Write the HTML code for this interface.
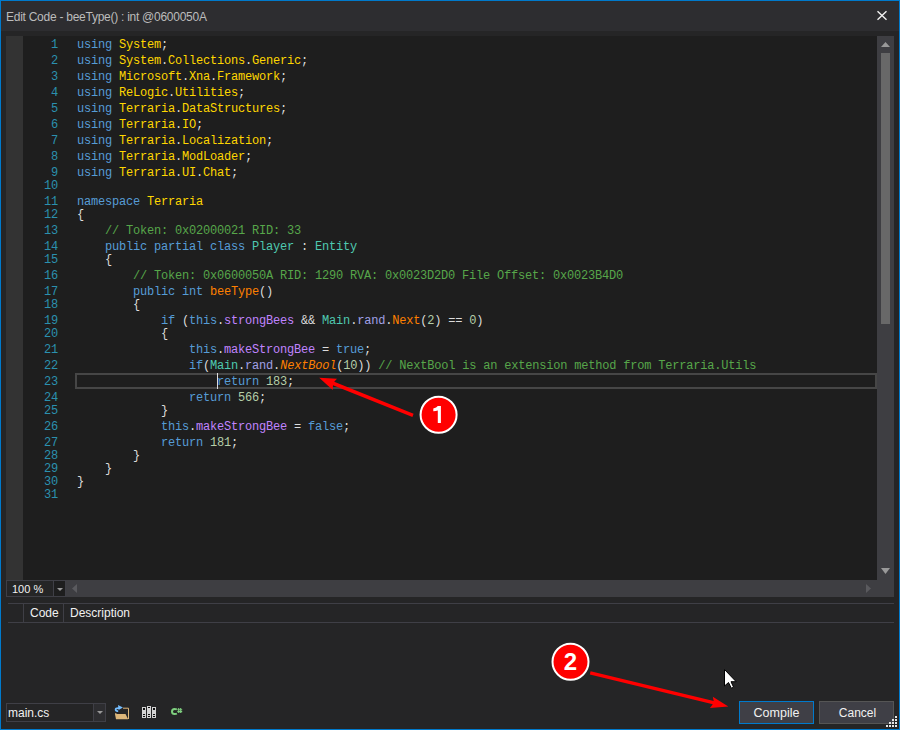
<!DOCTYPE html>
<html><head><meta charset="utf-8">
<style>
html,body{margin:0;padding:0;}
body{width:900px;height:730px;position:relative;overflow:hidden;background:#252526;font-family:"Liberation Sans",sans-serif;}
.a{position:absolute;}
#frame{left:0;top:0;width:898px;height:728px;border:1px solid #007acc;}
#title{left:1px;top:1px;width:898px;height:30px;background:#2d2d30;}
#ttext{left:6px;top:10px;font-size:12px;letter-spacing:-0.26px;color:#bcbcbc;white-space:pre;line-height:14px;}
#editor{left:6px;top:36px;width:871px;height:544px;background:#1e1e1e;}
#glyph{left:6px;top:36px;width:17px;height:544px;background:#333333;}
#vscroll{left:877px;top:36px;width:17px;height:561px;background:#3e3e42;}
#hscroll{left:66px;top:580px;width:828px;height:17px;background:#3e3e42;}
.code{position:absolute;left:77px;font-family:"Liberation Mono",monospace;font-size:12px;letter-spacing:-0.2px;line-height:16px;white-space:pre;color:#dcdcdc;}
.ln{position:absolute;left:23px;width:35px;text-align:right;font-family:"Liberation Mono",monospace;font-size:12px;letter-spacing:-0.2px;line-height:16px;white-space:pre;color:#2b91af;}
.k{color:#569cd6}.n{color:#ffd700}.t{color:#4ec9b0}.c{color:#57a64a}.u{color:#b5cea8}.m{color:#ff8000}.f{color:#c084ff}.s{color:#a0a0e6}.i{font-style:italic}
</style></head><body>
<div class="a" id="frame"></div>
<div class="a" id="title"></div>
<div class="a" id="ttext">Edit Code - beeType() : int @0600050A</div>
<svg class="a" style="left:876px;top:10px" width="12" height="11" viewBox="0 0 12 11"><path d="M1.5 1.3 L10.5 9.7 M10.5 1.3 L1.5 9.7" stroke="#f1f1f1" stroke-width="1.4" fill="none"/></svg>
<div class="a" id="editor"></div>
<div class="a" id="glyph"></div>
<div class="a" id="vscroll"></div>
<div class="a" id="hscroll"></div>
<!-- CODE -->
<div class="ln" style="top:37px">1</div>
<div class="code" style="top:37px"><span class="k">using</span> <span class="n">System</span>;</div>
<div class="ln" style="top:53px">2</div>
<div class="code" style="top:53px"><span class="k">using</span> <span class="n">System</span>.<span class="n">Collections</span>.<span class="n">Generic</span>;</div>
<div class="ln" style="top:69px">3</div>
<div class="code" style="top:69px"><span class="k">using</span> <span class="n">Microsoft</span>.<span class="n">Xna</span>.<span class="n">Framework</span>;</div>
<div class="ln" style="top:85px">4</div>
<div class="code" style="top:85px"><span class="k">using</span> <span class="n">ReLogic</span>.<span class="n">Utilities</span>;</div>
<div class="ln" style="top:101px">5</div>
<div class="code" style="top:101px"><span class="k">using</span> <span class="n">Terraria</span>.<span class="n">DataStructures</span>;</div>
<div class="ln" style="top:117px">6</div>
<div class="code" style="top:117px"><span class="k">using</span> <span class="n">Terraria</span>.<span class="n">IO</span>;</div>
<div class="ln" style="top:133px">7</div>
<div class="code" style="top:133px"><span class="k">using</span> <span class="n">Terraria</span>.<span class="n">Localization</span>;</div>
<div class="ln" style="top:149px">8</div>
<div class="code" style="top:149px"><span class="k">using</span> <span class="n">Terraria</span>.<span class="n">ModLoader</span>;</div>
<div class="ln" style="top:165px">9</div>
<div class="code" style="top:165px"><span class="k">using</span> <span class="n">Terraria</span>.<span class="n">UI</span>.<span class="n">Chat</span>;</div>
<div class="ln" style="top:178px">10</div>
<div class="ln" style="top:194px">11</div>
<div class="code" style="top:194px"><span class="k">namespace</span> <span class="n">Terraria</span></div>
<div class="ln" style="top:207px">12</div>
<div class="code" style="top:207px">{</div>
<div class="ln" style="top:223px">13</div>
<div class="code" style="top:223px">    <span class="c">// Token: 0x02000021 RID: 33</span></div>
<div class="ln" style="top:239px">14</div>
<div class="code" style="top:239px">    <span class="k">public partial class</span> <span class="t">Player</span> : <span class="t">Entity</span></div>
<div class="ln" style="top:252px">15</div>
<div class="code" style="top:252px">    {</div>
<div class="ln" style="top:268px">16</div>
<div class="code" style="top:268px">        <span class="c">// Token: 0x0600050A RID: 1290 RVA: 0x0023D2D0 File Offset: 0x0023B4D0</span></div>
<div class="ln" style="top:284px">17</div>
<div class="code" style="top:284px">        <span class="k">public int</span> <span class="m">beeType</span>()</div>
<div class="ln" style="top:297px">18</div>
<div class="code" style="top:297px">        {</div>
<div class="ln" style="top:313px">19</div>
<div class="code" style="top:313px">            <span class="k">if</span> (<span class="k">this</span>.<span class="f">strongBees</span> &amp;&amp; <span class="t">Main</span>.<span class="s">rand</span>.<span class="m">Next</span>(<span class="u">2</span>) == <span class="u">0</span>)</div>
<div class="ln" style="top:326px">20</div>
<div class="code" style="top:326px">            {</div>
<div class="ln" style="top:342px">21</div>
<div class="code" style="top:342px">                <span class="k">this</span>.<span class="f">makeStrongBee</span> = <span class="k">true</span>;</div>
<div class="ln" style="top:358px">22</div>
<div class="code" style="top:358px">                <span class="k">if</span>(<span class="t">Main</span>.<span class="s">rand</span>.<span class="m i">NextBool</span>(<span class="u">10</span>)) <span class="c">// NextBool is an extension method from Terraria.Utils</span></div>
<div class="ln" style="top:374px">23</div>
<div class="code" style="top:374px">                    <span class="k">return</span> <span class="u">183</span>;</div>
<div class="ln" style="top:390px">24</div>
<div class="code" style="top:390px">                <span class="k">return</span> <span class="u">566</span>;</div>
<div class="ln" style="top:403px">25</div>
<div class="code" style="top:403px">            }</div>
<div class="ln" style="top:419px">26</div>
<div class="code" style="top:419px">            <span class="k">this</span>.<span class="f">makeStrongBee</span> = <span class="k">false</span>;</div>
<div class="ln" style="top:435px">27</div>
<div class="code" style="top:435px">            <span class="k">return</span> <span class="u">181</span>;</div>
<div class="ln" style="top:448px">28</div>
<div class="code" style="top:448px">        }</div>
<div class="ln" style="top:461px">29</div>
<div class="code" style="top:461px">    }</div>
<div class="ln" style="top:474px">30</div>
<div class="code" style="top:474px">}</div>
<div class="ln" style="top:487px">31</div>
<!-- /CODE -->

<!-- caret line box -->
<div class="a" style="left:75px;top:373px;width:798px;height:12px;border:2px solid #464646;"></div>
<div class="a" style="left:217px;top:373px;width:1px;height:16px;background:#dcdcdc;"></div>
<!-- vscroll parts -->
<svg class="a" style="left:877px;top:36px" width="17" height="561" viewBox="0 0 17 561">
<path d="M4 11 L8.5 6 L13 11 Z" fill="#999999"/>
<rect x="4" y="17" width="9" height="271" fill="#686868"/>
<path d="M4 532 L8.5 538 L13 532 Z" fill="#999999"/>
</svg>
<!-- hscroll arrows -->
<svg class="a" style="left:66px;top:580px" width="828" height="17" viewBox="0 0 828 17">
<path d="M11 4 L6 8.5 L11 13 Z" fill="#5a5a5e"/>
<path d="M800 4 L805 8.5 L800 13 Z" fill="#5a5a5e"/>
</svg>
<!-- zoom combo -->
<div class="a" style="left:6px;top:580px;width:58px;height:15px;border:1px solid #3f3f46;background:#252526;"></div>
<div class="a" style="left:53px;top:580px;width:1px;height:17px;background:#3f3f46;"></div>
<div class="a" style="left:54px;top:581px;width:11px;height:15px;background:#1e1e1e;"></div>
<div class="a" style="left:12px;top:582px;font-size:11px;line-height:14px;color:#f1f1f1;white-space:pre;">100 %</div>
<svg class="a" style="left:56px;top:587px" width="8" height="5"><path d="M1 1 L7 1 L4 4 Z" fill="#999999"/></svg>
<!-- error list header -->
<div class="a" style="left:8px;top:603px;width:886px;height:1px;background:#3f3f46;"></div>
<div class="a" style="left:8px;top:622px;width:886px;height:1px;background:#3f3f46;"></div>
<div class="a" style="left:23px;top:604px;width:1px;height:18px;background:#3f3f46;"></div>
<div class="a" style="left:63px;top:604px;width:1px;height:18px;background:#3f3f46;"></div>
<div class="a" style="left:30px;top:606px;font-size:12px;line-height:14px;color:#f1f1f1;white-space:pre;">Code</div>
<div class="a" style="left:70px;top:606px;font-size:12px;line-height:14px;color:#f1f1f1;white-space:pre;">Description</div>
<!-- bottom combo -->
<div class="a" style="left:6px;top:703px;width:98px;height:17px;border:1px solid #3f3f46;background:#252526;"></div>
<div class="a" style="left:93px;top:703px;width:1px;height:19px;background:#3f3f46;"></div>
<div class="a" style="left:94px;top:704px;width:11px;height:17px;background:#2d2d30;"></div>
<div class="a" style="left:8px;top:706px;font-size:12px;line-height:14px;color:#f1f1f1;white-space:pre;">main.cs</div>
<svg class="a" style="left:96px;top:710px" width="8" height="5"><path d="M1 1 L7 1 L4 4 Z" fill="#999999"/></svg>
<!-- buttons -->
<div class="a" style="left:739px;top:701px;width:73px;height:21px;border:1px solid #007acc;background:#3f3f46;"></div>
<div class="a" style="left:739px;top:706px;width:75px;text-align:center;font-size:12.5px;line-height:14px;color:#f1f1f1;">Compile</div>
<div class="a" style="left:819px;top:701px;width:73px;height:21px;border:1px solid #555555;background:#3f3f46;"></div>
<div class="a" style="left:820px;top:706px;width:75px;text-align:center;font-size:12px;line-height:14px;color:#f1f1f1;">Cancel</div>
<!-- grip -->
<svg class="a" style="left:886px;top:716px" width="11" height="11">
<g fill="#e6e6e6"><rect x="9" y="0" width="2" height="2"/><rect x="6" y="3" width="2" height="2"/><rect x="9" y="3" width="2" height="2"/><rect x="3" y="6" width="2" height="2"/><rect x="6" y="6" width="2" height="2"/><rect x="9" y="6" width="2" height="2"/><rect x="0" y="9" width="2" height="2"/><rect x="3" y="9" width="2" height="2"/><rect x="6" y="9" width="2" height="2"/><rect x="9" y="9" width="2" height="2"/></g>
</svg>

<!-- annotations -->
<svg class="a" style="left:0;top:0" width="900" height="730" viewBox="0 0 900 730">
<polygon points="319.2,377.7 337.0,378.7 334.2,381.7 413.6,413.8 412.4,417.0 333.0,385.3 332.7,390.0" fill="#ff0000"/>
<polygon points="728.3,706.5 712.8,696.8 713.7,701.0 590.6,671.2 589.8,674.6 712.8,704.2 710.0,708.0" fill="#ff0000"/>
<circle cx="438.6" cy="414.7" r="18" fill="#ff0000" stroke="#ffffff" stroke-width="2"/>
<circle cx="570.5" cy="661.8" r="18" fill="#ff0000" stroke="#ffffff" stroke-width="2"/>
<path d="M437.8 406 H440.9 V423 H437.8 V410.6 Q435.8 411.2 433.3 411.2 V408.6 Q436.6 407.8 437.8 406 Z" fill="#ffffff"/>
<text x="570.5" y="670.1" text-anchor="middle" style="font-family:'Liberation Sans',sans-serif;font-weight:bold;font-size:24px" fill="#ffffff">2</text>
<path d="M724.5 669.5 V686 L728.5 682.5 L731.3 688.2 L733.6 687.2 L731 681.7 L736.2 681.7 Z" fill="#ffffff" stroke="#000000" stroke-width="1" stroke-linejoin="miter"/>
</svg>
<!-- icons -->
<svg class="a" style="left:110px;top:700px" width="24" height="24" viewBox="0 0 24 24">
<path d="M13 8.2 H18.5 V19" stroke="#dcb67a" stroke-width="1" fill="none"/>
<path d="M5 13.2 H6.3 L6.7 14 H15.5 L18.2 19.2 H6 L5 14.3 Z" fill="#dcb67a"/>
<path d="M8.2 11.2 H7.4 Q5.6 11.2 5.6 9.6 Q5.6 8.1 8.2 8.1 H9" stroke="#75beff" stroke-width="1.7" fill="none"/>
<path d="M8 5.1 L12.9 7.5 L8.6 9.9 Z" fill="#75beff"/>
</svg>
<svg class="a" style="left:138px;top:700px" width="24" height="24" viewBox="0 0 24 24">
<g fill="#d4d4d4"><rect x="4" y="7" width="4" height="11"/><rect x="9" y="6" width="4" height="12"/><rect x="14" y="7" width="4" height="11"/></g>
<g fill="#111111"><rect x="5" y="8" width="2" height="2"/><rect x="15" y="8" width="2" height="2"/>
<rect x="5" y="14" width="2" height="1"/><rect x="5" y="16" width="2" height="1"/>
<rect x="10" y="7" width="2" height="1"/><rect x="10" y="14" width="2" height="1"/><rect x="10" y="16" width="2" height="1"/>
<rect x="15" y="14" width="2" height="1"/><rect x="15" y="16" width="2" height="1"/></g>
</svg>
<svg class="a" style="left:166px;top:700px" width="24" height="24" viewBox="0 0 24 24">
<path d="M10.9 9.3 Q10.2 9 8.6 9 Q6 9 6 11.5 Q6 14 8.6 14 Q10.2 14 10.9 13.7" stroke="#7fd07f" stroke-width="2" fill="none"/>
<path d="M12.7 8 V13 M14.7 8 V13 M11.3 9.7 H16.2 M11.3 11.6 H16.2" stroke="#7fd07f" stroke-width="1.1" fill="none"/>
</svg>
</body></html>
